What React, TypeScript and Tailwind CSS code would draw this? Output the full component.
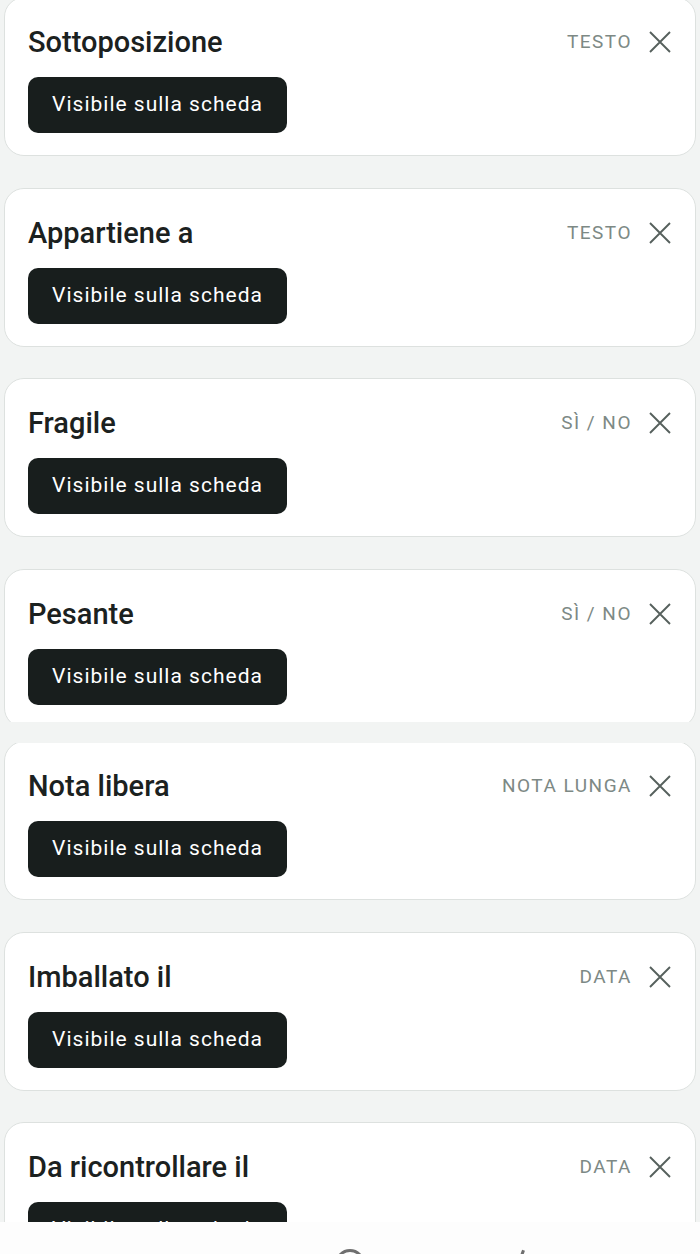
const fields = [
  { title: "Sottoposizione", type: "Testo", clipTop: 3, height: 156 },
  { title: "Appartiene a", type: "Testo", mt: 32 },
  { title: "Fragile", type: "Sì / No", mt: 31 },
  { title: "Pesante", type: "Sì / No", mt: 32, height: 153 },
  { title: "Nota libera", type: "Nota lunga", mt: 21, clipTop: 2, height: 157 },
  { title: "Imballato il", type: "Data", mt: 32 },
  { title: "Da ricontrollare il", type: "Data", mt: 31, height: 100 },
];

const mtClass: Record<number, string> = {
  0: "mt-0",
  21: "mt-[21px]",
  31: "mt-[31px]",
  32: "mt-[32px]",
};

const hClass: Record<number, string> = {
  156: "h-[156px]",
  153: "h-[153px]",
  157: "h-[157px]",
  100: "h-[100px]",
};

const clipClass: Record<number, string> = {
  0: "mt-0",
  2: "-mt-[2px]",
  3: "-mt-[3px]",
};

function CloseIcon() {
  return (
    <svg width="22" height="22" viewBox="0 0 22 22" className="text-[#56605d]">
      <path d="M1 1 L21 21 M21 1 L1 21" stroke="currentColor" strokeWidth="1.9" fill="none" />
    </svg>
  );
}

function FieldCard({ title, type }: { title: string; type: string }) {
  return (
    <div className="bg-white border border-[#dde1df] rounded-[20px] pt-[28px] pb-[22px] pl-[23px] pr-[24px]">
      <div className="flex items-center justify-between h-[32px]">
        <h3 className="text-[29px] font-medium text-[#1b2120] leading-[32px]">{title}</h3>
        <div className="flex items-center gap-[17px]">
          <span className="text-[19px] uppercase tracking-[1.5px] text-[#7d8985]">{type}</span>
          <CloseIcon />
        </div>
      </div>
      <button className="mt-[19px] h-[56px] w-[259px] rounded-[10px] bg-[#181e1d] text-white text-[21px] tracking-[1px] flex items-center justify-center">
        Visibile sulla scheda
      </button>
    </div>
  );
}

export default function App() {
  return (
    <div
      className="w-[700px] h-[1254px] overflow-hidden bg-[#f2f4f3] flex flex-col"
      style={{ fontFamily: "Roboto, 'Liberation Sans', sans-serif" }}
    >
      <div className="flex-1 px-[4px] flex flex-col">
        {fields.map((f) => (
          <div
            key={f.title}
            className={`${mtClass[f.mt ?? 0]} ${f.height ? hClass[f.height] : ""} overflow-hidden shrink-0`}
          >
            <div className={clipClass[f.clipTop ?? 0]}>
              <FieldCard title={f.title} type={f.type} />
            </div>
          </div>
        ))}
      </div>
      <div className="h-[32px] shrink-0 bg-[#fdfdfd] relative overflow-hidden">
        <div className="absolute left-[335px] top-[27px] w-[30px] h-[30px] rounded-full border-[3px] border-[#6f6f6f]" />
        <div className="absolute left-[521px] top-[28px] w-[3px] h-[6px] bg-[#6f6f6f] rotate-[20deg]" />
      </div>
    </div>
  );
}
